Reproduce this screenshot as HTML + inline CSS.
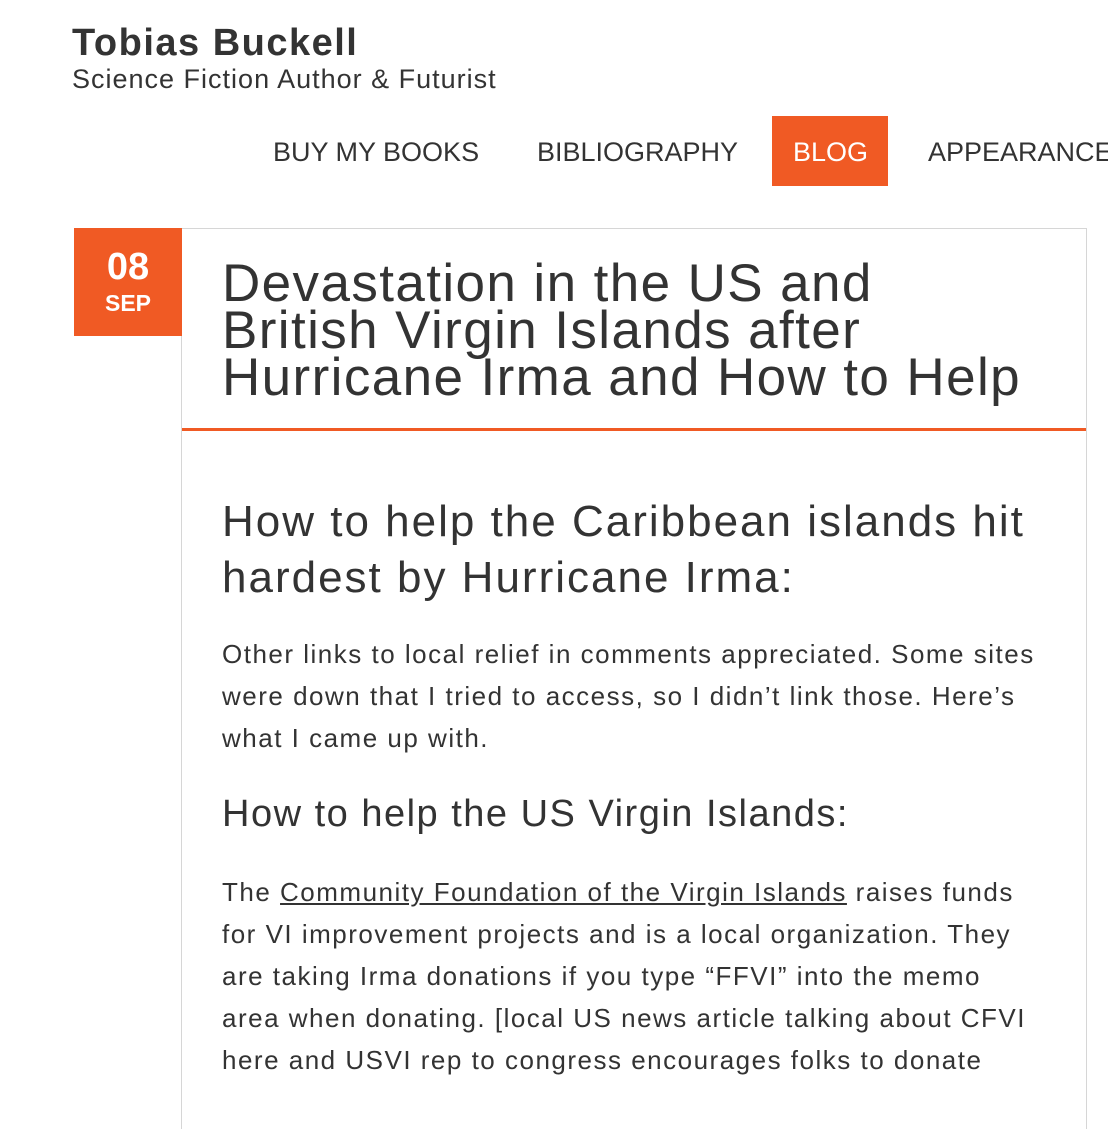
<!DOCTYPE html>
<html><head><meta charset="utf-8"><style>
body{margin:0;width:1108px;height:1068px;overflow:hidden;background:#fff;font-family:"Liberation Sans",sans-serif;color:#333;position:relative}
.a{position:absolute;white-space:nowrap}
</style></head><body>
<div class="a" style="left:72px;top:22px;font-size:38px;font-weight:bold;color:#333;letter-spacing:1.5px">Tobias Buckell</div>
<div class="a" style="left:72px;top:64px;font-size:27px;color:#333;letter-spacing:1px">Science Fiction Author &amp; Futurist</div>
<div class="a" style="left:273px;top:137px;font-size:27px">BUY MY BOOKS</div>
<div class="a" style="left:537px;top:137px;font-size:27px">BIBLIOGRAPHY</div>
<div class="a" style="left:772px;top:116px;width:116px;height:70px;background:#f05a24"></div>
<div class="a" style="left:793px;top:137px;font-size:27px;color:#fff">BLOG</div>
<div class="a" style="left:928px;top:137px;font-size:27px">APPEARANCES</div>
<div class="a" style="left:181px;top:228px;width:904px;height:900px;border:1.5px solid #d6d6d6;border-bottom:none"></div>
<div class="a" style="left:74px;top:228px;width:108px;height:108px;background:#f05a24"></div>
<div class="a" style="left:74px;top:246px;width:108px;text-align:center;font-size:38px;font-weight:bold;color:#fff">08</div>
<div class="a" style="left:74px;top:290px;width:108px;text-align:center;font-size:23px;font-weight:bold;color:#fff">SEP</div>
<div class="a" style="left:182px;top:428px;width:904px;height:3px;background:#f05a24"></div>
<div class="a" style="left:222px;top:260px;font-size:53px;line-height:47px;color:#333;letter-spacing:1.4px">Devastation in the US and<br>British Virgin Islands after<br>Hurricane Irma and How to Help</div>
<div class="a" style="left:222px;top:494px;font-size:44px;line-height:56px;letter-spacing:2px">How to help the Caribbean islands hit<br>hardest by Hurricane Irma:</div>
<div class="a" style="left:222px;top:633px;font-size:26px;line-height:42px;letter-spacing:1.5px">Other links to local relief in comments appreciated. Some sites<br>were down that I tried to access, so I didn’t link those. Here’s<br>what I came up with.</div>
<div class="a" style="left:222px;top:793px;font-size:38px;letter-spacing:1.5px">How to help the US Virgin Islands:</div>
<div class="a" style="left:222px;top:871px;font-size:26px;line-height:42px;letter-spacing:1.5px">The <u>Community Foundation of the Virgin Islands</u> raises funds<br>for VI improvement projects and is a local organization. They<br>are taking Irma donations if you type “FFVI” into the memo<br>area when donating. [local US news article talking about CFVI<br>here and USVI rep to congress encourages folks to donate</div>
</body></html>
